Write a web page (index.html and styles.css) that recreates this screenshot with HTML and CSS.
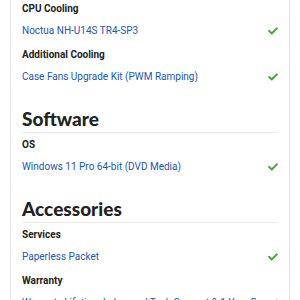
FILE: index.html
```html
<!DOCTYPE html>
<html lang="en">
<head>
    <meta charset="UTF-8">
    <meta name="viewport" content="width=device-width, initial-scale=1.0">
    <title>Build Summary</title>
    <link rel="stylesheet" href="styles.css">
</head>
<body>
    <div class="summary">
        <div class="section first">
            <div class="group">
                <div class="label">CPU Cooling</div>
                <div class="choice">
                    <a href="#">Noctua NH-U14S TR4-SP3</a>
                    <svg class="check" viewBox="0 0 512 512"><path d="M173.9 439.4l-166.4-166.4c-10-10-10-26.2 0-36.2l36.2-36.2c10-10 26.2-10 36.2 0L192 312.7 432.1 72.6c10-10 26.2-10 36.2 0l36.2 36.2c10 10 10 26.2 0 36.2l-294.4 294.4c-10 10-26.2 10-36.2 0z"/></svg>
                </div>
            </div>
            <div class="group">
                <div class="label">Additional Cooling</div>
                <div class="choice">
                    <a href="#">Case Fans Upgrade Kit (PWM Ramping)</a>
                    <svg class="check" viewBox="0 0 512 512"><path d="M173.9 439.4l-166.4-166.4c-10-10-10-26.2 0-36.2l36.2-36.2c10-10 26.2-10 36.2 0L192 312.7 432.1 72.6c10-10 26.2-10 36.2 0l36.2 36.2c10 10 10 26.2 0 36.2l-294.4 294.4c-10 10-26.2 10-36.2 0z"/></svg>
                </div>
            </div>
        </div>

        <div class="section">
            <h2>Software</h2>
            <div class="group">
                <div class="label">OS</div>
                <div class="choice">
                    <a href="#">Windows 11 Pro 64-bit (DVD Media)</a>
                    <svg class="check" viewBox="0 0 512 512"><path d="M173.9 439.4l-166.4-166.4c-10-10-10-26.2 0-36.2l36.2-36.2c10-10 26.2-10 36.2 0L192 312.7 432.1 72.6c10-10 26.2-10 36.2 0l36.2 36.2c10 10 10 26.2 0 36.2l-294.4 294.4c-10 10-26.2 10-36.2 0z"/></svg>
                </div>
            </div>
        </div>

        <div class="section">
            <h2>Accessories</h2>
            <div class="group">
                <div class="label">Services</div>
                <div class="choice">
                    <a href="#">Paperless Packet</a>
                    <svg class="check" viewBox="0 0 512 512"><path d="M173.9 439.4l-166.4-166.4c-10-10-10-26.2 0-36.2l36.2-36.2c10-10 26.2-10 36.2 0L192 312.7 432.1 72.6c10-10 26.2-10 36.2 0l36.2 36.2c10 10 10 26.2 0 36.2l-294.4 294.4c-10 10-26.2 10-36.2 0z"/></svg>
                </div>
            </div>
            <div class="group">
                <div class="label">Warranty</div>
                <div class="choice">
                    <a href="#">Warranty Lifetime Labor and Tech Support &amp; 1 Year Parts</a>
                    <svg class="check" viewBox="0 0 512 512"><path d="M173.9 439.4l-166.4-166.4c-10-10-10-26.2 0-36.2l36.2-36.2c10-10 26.2-10 36.2 0L192 312.7 432.1 72.6c10-10 26.2-10 36.2 0l36.2 36.2c10 10 10 26.2 0 36.2l-294.4 294.4c-10 10-26.2 10-36.2 0z"/></svg>
                </div>
            </div>
        </div>
    </div>
</body>
</html>
```

FILE: styles.css
```css
* {
    margin: 0;
    padding: 0;
    box-sizing: border-box;
}

body {
    background-color: #fff;
    font-family: Roboto, "Liberation Sans", Arial, sans-serif;
    overflow: hidden;
}

.summary {
    margin: 0 10px;
    padding: 0 11px;
    border-left: 1px solid #e6e6e6;
    border-right: 1px solid #e6e6e6;
    min-height: 300px;
}

.section {
    padding-top: 14px;
}

.section.first {
    padding-top: 1px;
}

h2 {
    font-family: Lato, Inter, sans-serif;
    font-weight: 900;
    font-size: 19px;
    line-height: 24px;
    color: #222;
    padding-bottom: 1px;
    border-bottom: 1px solid #ececec;
    margin-bottom: 4px;
}

.group {
    margin-bottom: 8px;
}

.label {
    font-size: 10px;
    font-weight: 700;
    color: #222;
    line-height: 16px;
    margin-bottom: 6px;
}

.choice {
    display: flex;
    justify-content: space-between;
    align-items: center;
    line-height: 16px;
    font-size: 10px;
    white-space: nowrap;
}

.choice a {
    color: #2256b8;
    text-decoration: none;
    overflow: hidden;
}

.check {
    width: 10px;
    height: 10px;
    fill: #3dae2b;
    flex-shrink: 0;
    margin-left: 12px;
}
```
